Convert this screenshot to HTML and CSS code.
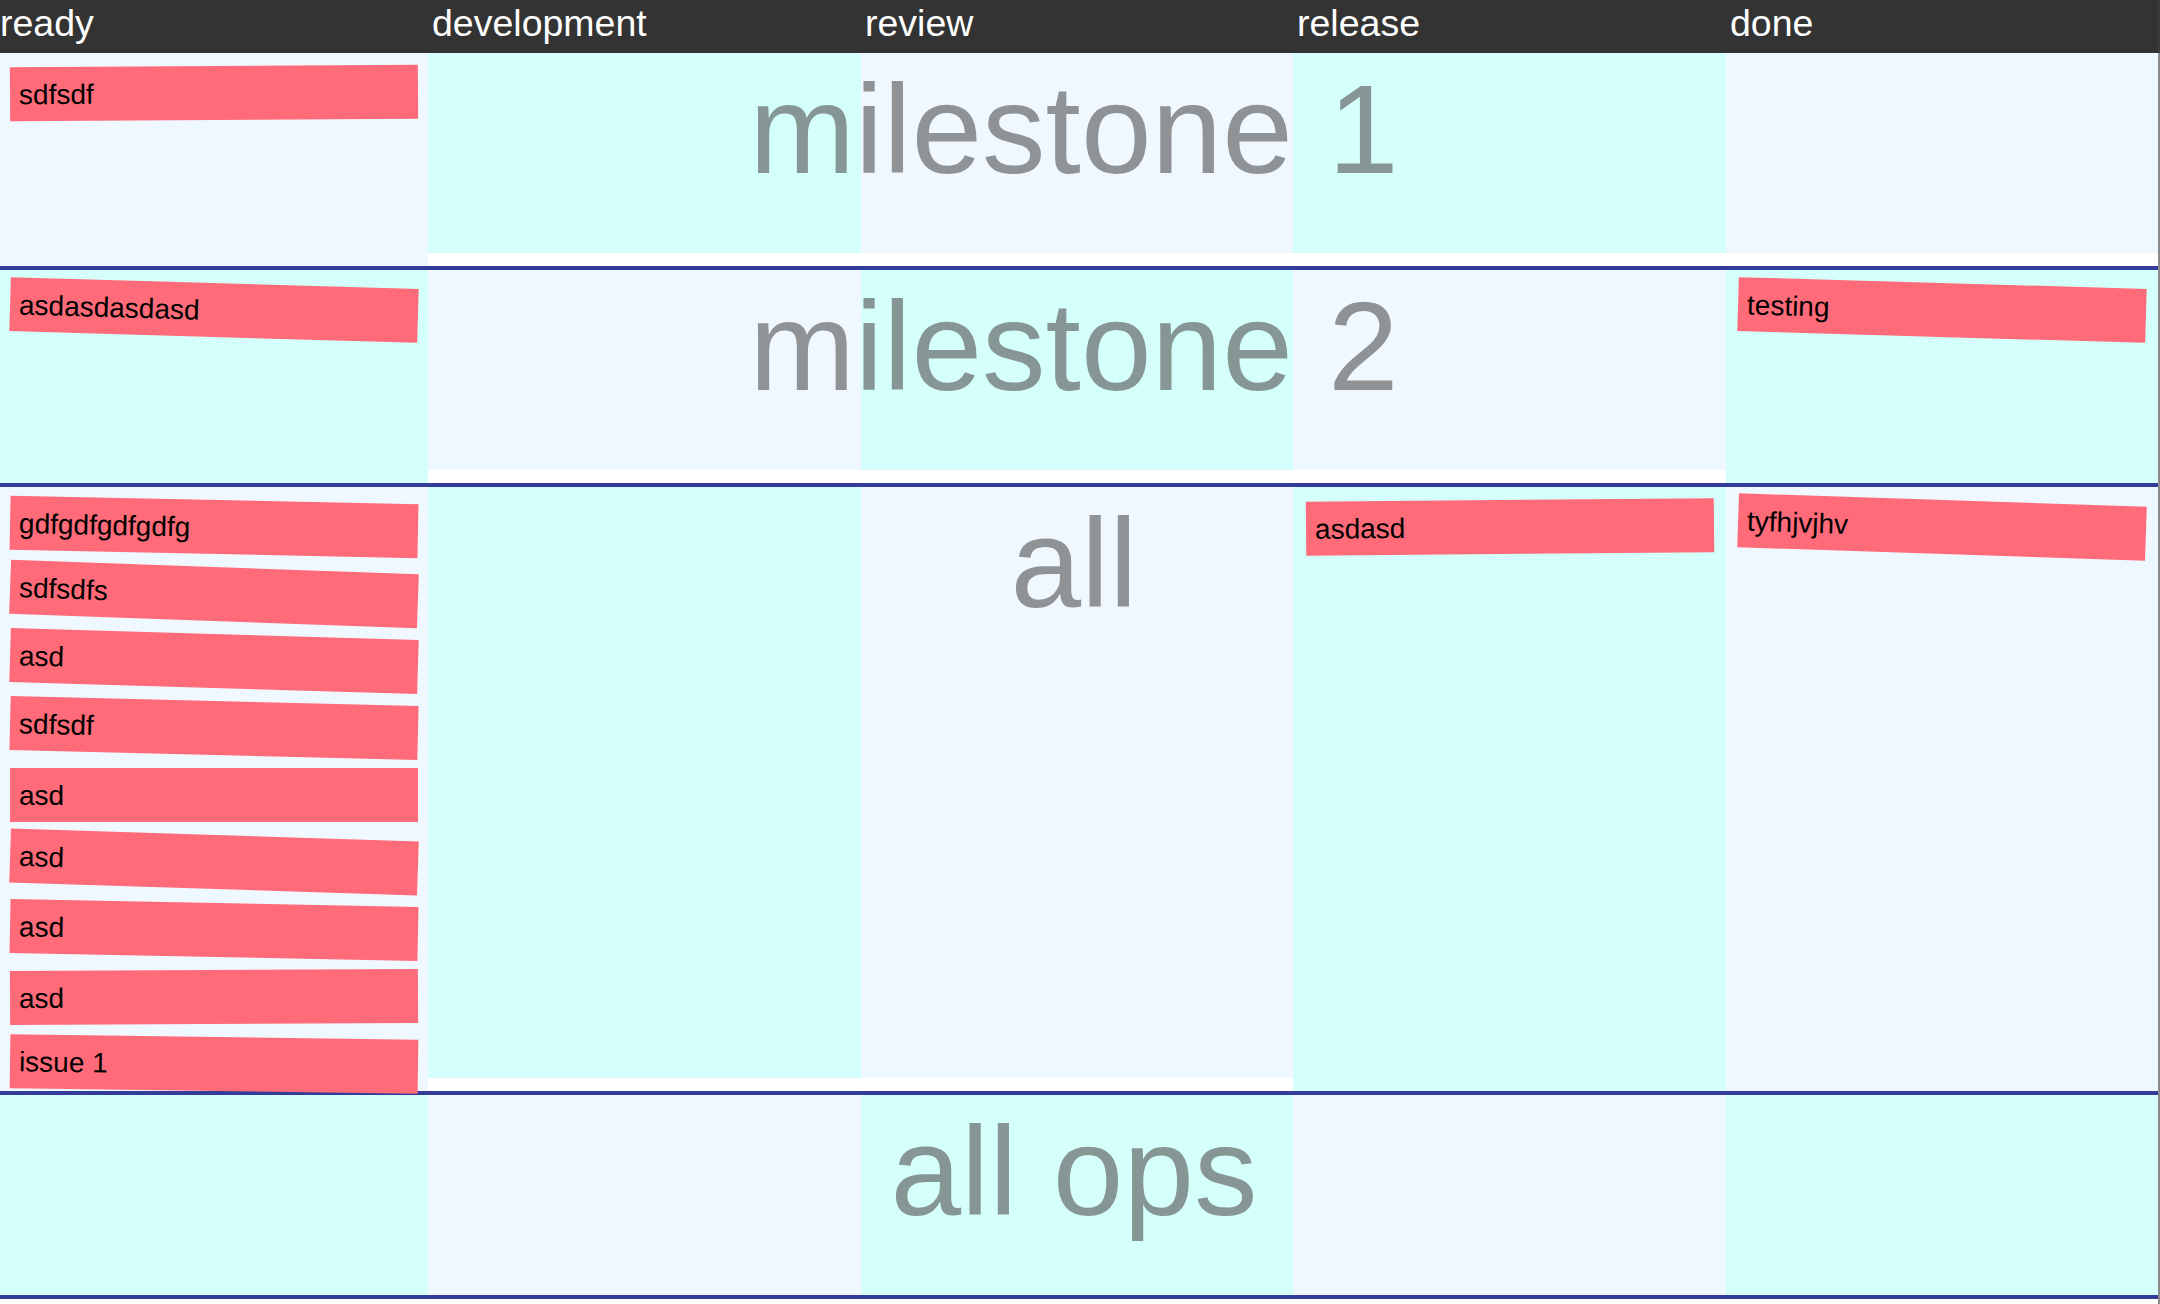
FILE: index.html
```html
<!DOCTYPE html>
<html lang="en">
<head>
<meta charset="utf-8">
<title>Board</title>
<link rel="stylesheet" href="styles.css">
</head>
<body>
<div class="app">
  <main class="board">
    <header class="head">
      <div class="head-col">ready</div>
      <div class="head-col">development</div>
      <div class="head-col">review</div>
      <div class="head-col">release</div>
      <div class="head-col">done</div>
    </header>

    <section class="lane lane--odd">
      <h2 class="lane-title">milestone 1</h2>
      <div class="cell cell--filled">
        <div class="card" style="--r:-0.38deg">sdfsdf</div>
      </div>
      <div class="cell cell--short"></div>
      <div class="cell cell--short"></div>
      <div class="cell cell--short"></div>
      <div class="cell cell--short"></div>
    </section>

    <section class="lane lane--even">
      <h2 class="lane-title">milestone 2</h2>
      <div class="cell cell--filled">
        <div class="card" style="--r:1.65deg">asdasdasdasd</div>
      </div>
      <div class="cell cell--short"></div>
      <div class="cell cell--short"></div>
      <div class="cell cell--short"></div>
      <div class="cell cell--filled">
        <div class="card" style="--r:1.65deg">testing</div>
      </div>
    </section>

    <section class="lane lane--odd">
      <h2 class="lane-title">all</h2>
      <div class="cell cell--filled">
        <div class="card" style="--r:1.17deg">gdfgdfgdfgdfg</div>
        <div class="card" style="--r:2.05deg">sdfsdfs</div>
        <div class="card" style="--r:1.7deg">asd</div>
        <div class="card" style="--r:1.4deg">sdfsdf</div>
        <div class="card" style="--r:0deg">asd</div>
        <div class="card" style="--r:1.83deg">asd</div>
        <div class="card" style="--r:1.13deg">asd</div>
        <div class="card" style="--r:-0.28deg">asd</div>
        <div class="card" style="--r:0.8deg">issue 1</div>
      </div>
      <div class="cell cell--short"></div>
      <div class="cell cell--short"></div>
      <div class="cell cell--filled">
        <div class="card" style="--r:-0.52deg">asdasd</div>
      </div>
      <div class="cell cell--filled">
        <div class="card" style="--r:1.89deg">tyfhjvjhv</div>
      </div>
    </section>

    <section class="lane lane--even">
      <h2 class="lane-title">all ops</h2>
      <div class="cell"></div>
      <div class="cell"></div>
      <div class="cell"></div>
      <div class="cell"></div>
      <div class="cell"></div>
    </section>
  </main>
  <div class="edge"></div>
</div>
</body>
</html>
```

FILE: styles.css
```css
html, body {
  margin: 0;
  padding: 0;
  background: #ffffff;
}

body {
  font-family: "Liberation Sans", Arial, Helvetica, sans-serif;
  color: #000;
}

.app {
  display: flex;
  min-height: 1304px;
}

.board {
  flex: 1;
  min-width: 0;
}

.edge {
  width: 2px;
  flex: none;
  background: linear-gradient(#3c3c3c 0, #3c3c3c 53px, #8a8a8a 53px, #8a8a8a 100%);
}

.head {
  display: grid;
  grid-template-columns: 428fr 433fr 432fr 433fr 432fr;
  height: 53px;
  box-sizing: border-box;
  background: #333333;
  color: #ffffff;
  font-size: 37.5px;
  line-height: 47px;
}

.head-col {
  padding-left: 4px;
  white-space: nowrap;
}

.head-col:first-child {
  padding-left: 0;
}

.lane {
  position: relative;
  display: grid;
  grid-template-columns: 428fr 433fr 432fr 433fr 432fr;
  align-items: stretch;
  background: #ffffff;
  border-bottom: 4px solid #333d99;
}

.lane-title {
  position: absolute;
  top: 0;
  left: 0;
  right: 10px;
  margin: 0;
  padding-top: 3px;
  text-align: center;
  font-size: 127px;
  font-weight: normal;
  line-height: normal;
  color: rgba(85, 85, 85, 0.62);
  white-space: nowrap;
  pointer-events: none;
  z-index: 2;
}

.cell {
  min-height: 200px;
}

.cell--filled {
  padding-top: 13px;
}

.cell--short {
  margin-bottom: 13px;
}

.lane--odd .cell:nth-child(odd),
.lane--even .cell:nth-child(even) {
  background: #d5fffa;
}

.lane--odd .cell:nth-child(even),
.lane--even .cell:nth-child(odd) {
  background: #f0f8ff;
}

.card {
  width: 408px;
  margin: 0 auto;
  box-sizing: border-box;
  padding: 12px 9px 10px;
  background: #ff6b78;
  font-size: 28px;
  line-height: 32.1px;
  white-space: nowrap;
  transform: rotate(var(--r, 0deg));
}

.card + .card {
  margin-top: 13px;
}
```
